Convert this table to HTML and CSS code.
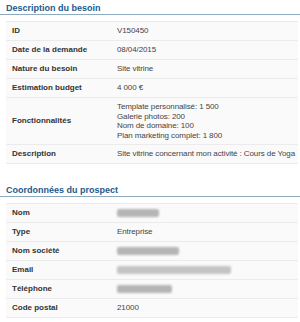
FILE: index.html
```html
<!DOCTYPE html>
<html lang="fr">
<head>
<meta charset="utf-8">
<title>Demande</title>
<link rel="stylesheet" href="styles.css">
</head>
<body>
<div class="page">
  <section class="block">
    <h2 class="block-title">Description du besoin</h2>
    <table class="info">
      <tr><th>ID</th><td>V150450</td></tr>
      <tr><th>Date de la demande</th><td>08/04/2015</td></tr>
      <tr><th>Nature du besoin</th><td>Site vitrine</td></tr>
      <tr><th>Estimation budget</th><td>4 000 €</td></tr>
      <tr class="multi"><th>Fonctionnalités</th><td>Template personnalisé: 1 500<br>Galerie photos: 200<br>Nom de domaine: 100<br>Plan marketing complet: 1 800</td></tr>
      <tr><th>Description</th><td>Site vitrine concernant mon activité : Cours de Yoga</td></tr>
    </table>
  </section>
  <section class="block block-second">
    <h2 class="block-title">Coordonnées du prospect</h2>
    <table class="info">
      <tr><th>Nom</th><td><span class="redact w-nom"></span></td></tr>
      <tr><th>Type</th><td>Entreprise</td></tr>
      <tr><th>Nom société</th><td><span class="redact w-soc"></span></td></tr>
      <tr><th>Email</th><td><span class="redact w-mail"></span></td></tr>
      <tr><th>Téléphone</th><td><span class="redact w-tel"></span></td></tr>
      <tr><th>Code postal</th><td>21000</td></tr>
    </table>
  </section>
</div>
</body>
</html>
```

FILE: styles.css
```css
html, body {
  margin: 0;
  padding: 0;
  background: #ffffff;
}
body {
  font-family: "Liberation Sans", Arial, Helvetica, sans-serif;
  color: #333333;
}
.page {
  padding: 2px 2px 0 6px;
}
.block-title {
  margin: 0 -2px 6px -6px;
  padding: 0 0 0 6px;
  font-size: 9px;
  line-height: 12px;
  font-weight: bold;
  color: #1d5a8c;
  border-bottom: 1px solid #8eaabe;
}
.block-second {
  margin-top: 20px;
}
.info {
  width: 100%;
  border-collapse: collapse;
  font-size: 8px;
  line-height: 10px;
  background: #fafafa;
}
.info th,
.info td {
  text-align: left;
  vertical-align: middle;
  padding: 4px 6px;
  border-top: 1px solid #ebebeb;
}
.info tr:last-child th,
.info tr:last-child td {
  border-bottom: 1px solid #ebebeb;
}
.info th {
  width: 93px;
  font-weight: bold;
  color: #333333;
}
.info td {
  color: #444444;
  white-space: nowrap;
  padding-right: 0;
  letter-spacing: -0.1px;
}
.info .multi td {
  line-height: 9.5px;
}
.redact {
  display: inline-block;
  height: 8px;
  vertical-align: middle;
  background: #b5b5b5;
  border-radius: 2px;
  filter: blur(1.2px);
}
.w-nom { width: 42px; }
.w-soc { width: 62px; }
.w-mail { width: 114px; background: #c4c4c4; }
.w-tel { width: 55px; }
```
